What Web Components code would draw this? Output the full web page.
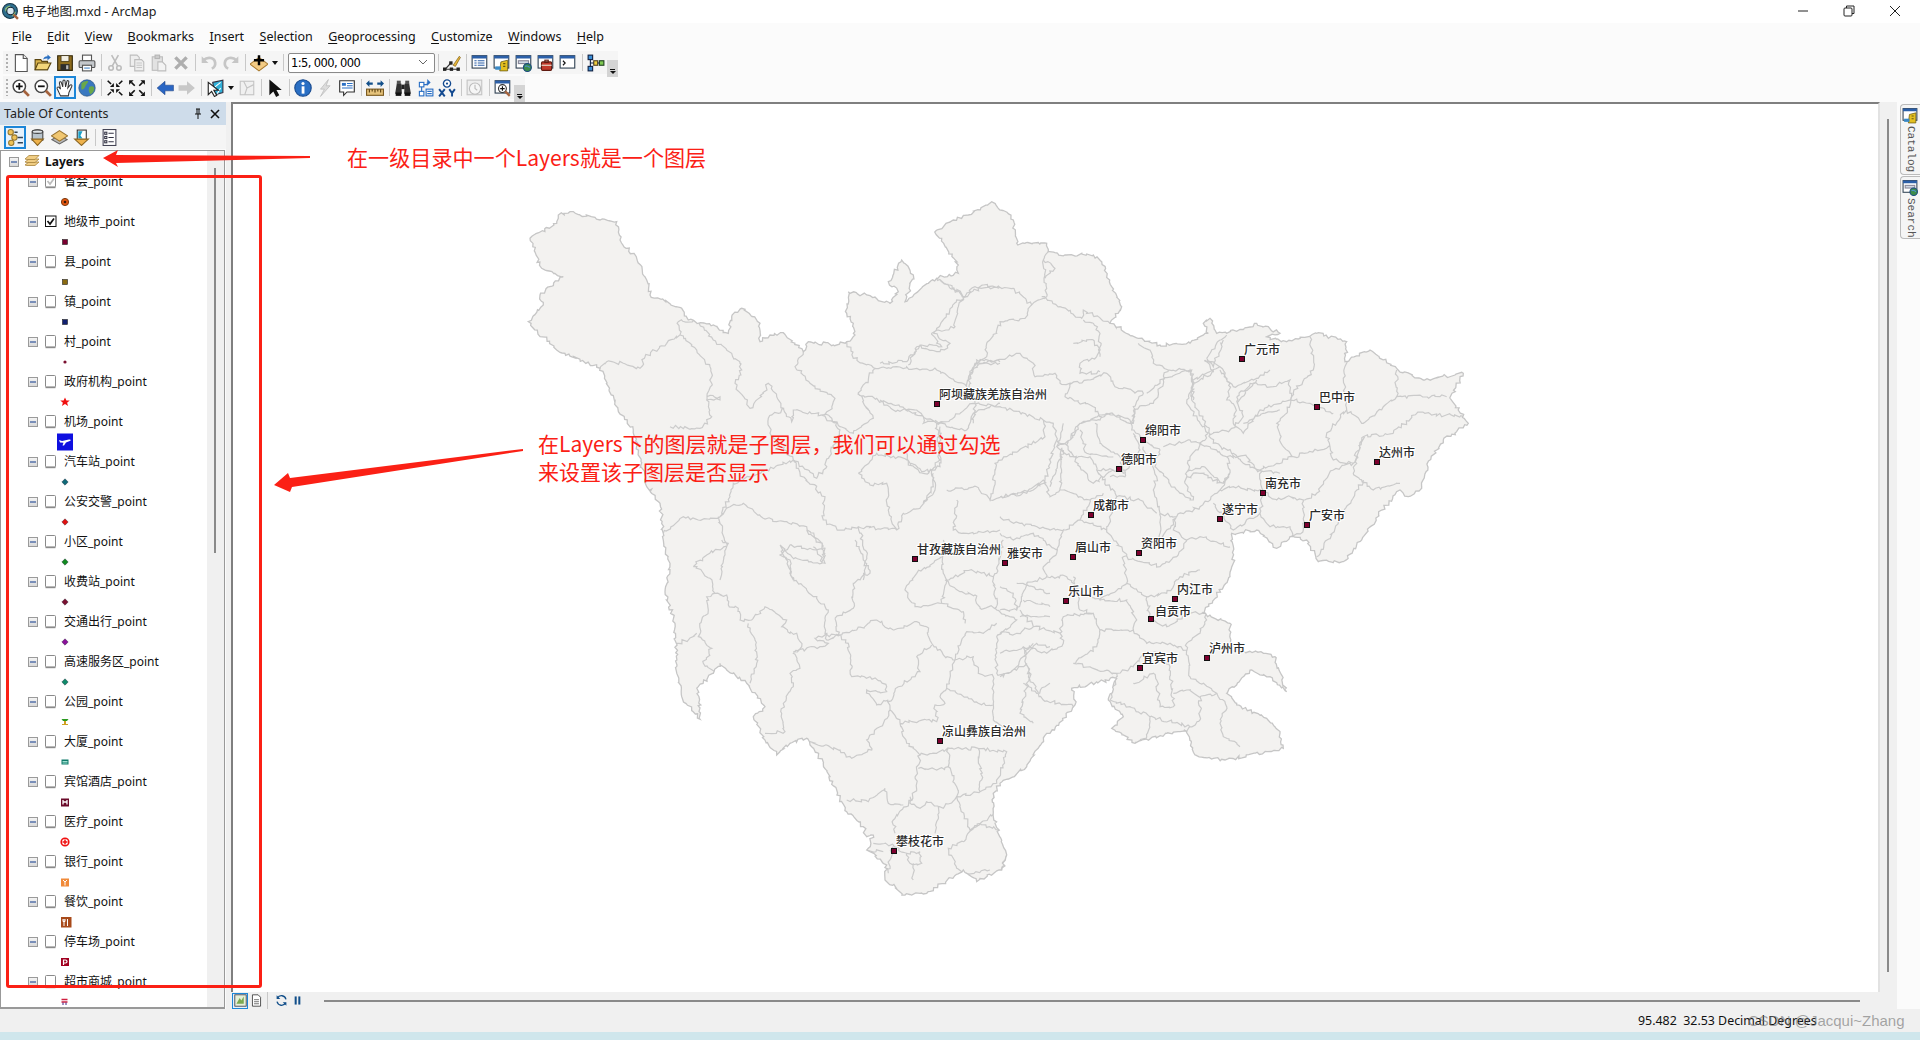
<!DOCTYPE html>
<html lang="zh">
<head>
<meta charset="utf-8">
<title>电子地图.mxd - ArcMap</title>
<style>
  html, body { margin: 0; height: 100%; overflow: hidden; background: #f0f0f0; }
  body { font-family: "Noto Sans", "Noto Sans CJK SC", sans-serif; font-size: 12px; color: #000; }
</style>
</head>
<body>
<arc-app>
  <arc-titlebar slot="title">电子地图.mxd - ArcMap</arc-titlebar>
  <arc-menubar slot="menu" items="File,Edit,View,Bookmarks,Insert,Selection,Geoprocessing,Customize,Windows,Help"></arc-menubar>

  <arc-toolbar slot="tools">
    <tool-icon name="new"></tool-icon><tool-icon name="open"></tool-icon><tool-icon name="save"></tool-icon><tool-icon name="print"></tool-icon>
    <tool-sep></tool-sep>
    <tool-icon name="cut"></tool-icon><tool-icon name="copy"></tool-icon><tool-icon name="paste"></tool-icon><tool-icon name="del"></tool-icon>
    <tool-sep></tool-sep>
    <tool-icon name="undo"></tool-icon><tool-icon name="redo"></tool-icon>
    <tool-sep></tool-sep>
    <tool-icon name="add"></tool-icon><tool-drop></tool-drop>
    <tool-sep></tool-sep>
    <scale-box>1:5, 000, 000</scale-box>
    <tool-sep></tool-sep>
    <tool-icon name="editor"></tool-icon>
    <tool-sep></tool-sep>
    <tool-icon name="wintoc"></tool-icon><tool-icon name="wincat"></tool-icon><tool-icon name="winsearch"></tool-icon><tool-icon name="wintool"></tool-icon><tool-icon name="winpy"></tool-icon>
    <tool-sep></tool-sep>
    <tool-icon name="model"></tool-icon>
    <tool-handle></tool-handle>
  </arc-toolbar>

  <arc-toolbar slot="tools">
    <tool-icon name="zoomin"></tool-icon><tool-icon name="zoomout"></tool-icon><tool-icon name="hand" selected></tool-icon><tool-icon name="globe"></tool-icon>
    <tool-sep></tool-sep>
    <tool-icon name="fixedin"></tool-icon><tool-icon name="fixedout"></tool-icon>
    <tool-sep></tool-sep>
    <tool-icon name="back"></tool-icon><tool-icon name="fwd"></tool-icon>
    <tool-sep></tool-sep>
    <tool-icon name="select"></tool-icon><tool-drop></tool-drop><tool-icon name="clear"></tool-icon>
    <tool-sep></tool-sep>
    <tool-icon name="arrow"></tool-icon>
    <tool-sep></tool-sep>
    <tool-icon name="info"></tool-icon><tool-icon name="bolt"></tool-icon><tool-icon name="popup"></tool-icon>
    <tool-sep></tool-sep>
    <tool-icon name="measure"></tool-icon>
    <tool-sep></tool-sep>
    <tool-icon name="find"></tool-icon><tool-icon name="route"></tool-icon><tool-icon name="xy"></tool-icon>
    <tool-sep></tool-sep>
    <tool-icon name="time"></tool-icon>
    <tool-sep></tool-sep>
    <tool-icon name="viewer"></tool-icon>
    <tool-handle></tool-handle>
  </arc-toolbar>

  <toc-panel slot="toc" heading="Table Of Contents">
    <layer-row name="省会_point" check="dim" swatch="capital"></layer-row>
    <layer-row name="地级市_point" check="on" swatch="sq:#7a0030"></layer-row>
    <layer-row name="县_point" swatch="sq:#8a6a10"></layer-row>
    <layer-row name="镇_point" swatch="sq:#102070"></layer-row>
    <layer-row name="村_point" swatch="dot"></layer-row>
    <layer-row name="政府机构_point" swatch="star"></layer-row>
    <layer-row name="机场_point" swatch="plane"></layer-row>
    <layer-row name="汽车站_point" swatch="di:#0f6a78"></layer-row>
    <layer-row name="公安交警_point" swatch="di:#e01010"></layer-row>
    <layer-row name="小区_point" swatch="di:#108a20"></layer-row>
    <layer-row name="收费站_point" swatch="di:#7a1030"></layer-row>
    <layer-row name="交通出行_point" swatch="di:#8a109a"></layer-row>
    <layer-row name="高速服务区_point" swatch="di:#0f8a6a"></layer-row>
    <layer-row name="公园_point" swatch="tree"></layer-row>
    <layer-row name="大厦_point" swatch="tower"></layer-row>
    <layer-row name="宾馆酒店_point" swatch="hotel"></layer-row>
    <layer-row name="医疗_point" swatch="cross"></layer-row>
    <layer-row name="银行_point" swatch="bank"></layer-row>
    <layer-row name="餐饮_point" swatch="food"></layer-row>
    <layer-row name="停车场_point" swatch="park"></layer-row>
    <layer-row name="超市商城_point" swatch="shop"></layer-row>
  </toc-panel>

  <map-view slot="map">
    <map-label x="1242" y="359">广元市</map-label>
    <map-label x="1317" y="407">巴中市</map-label>
    <map-label x="1143" y="440">绵阳市</map-label>
    <map-label x="1119" y="469">德阳市</map-label>
    <map-label x="1377" y="462">达州市</map-label>
    <map-label x="1263" y="493">南充市</map-label>
    <map-label x="1220" y="519">遂宁市</map-label>
    <map-label x="1307" y="525">广安市</map-label>
    <map-label x="1091" y="515">成都市</map-label>
    <map-label x="1073" y="557">眉山市</map-label>
    <map-label x="1139" y="553">资阳市</map-label>
    <map-label x="1005" y="563">雅安市</map-label>
    <map-label x="1066" y="601">乐山市</map-label>
    <map-label x="1175" y="599">内江市</map-label>
    <map-label x="1151" y="619" dx="4" dy="-8">自贡市</map-label>
    <map-label x="1207" y="658">泸州市</map-label>
    <map-label x="1140" y="668">宜宾市</map-label>
    <map-label x="937" y="404">阿坝藏族羌族自治州</map-label>
    <map-label x="915" y="559">甘孜藏族自治州</map-label>
    <map-label x="940" y="741">凉山彝族自治州</map-label>
    <map-label x="894" y="851">攀枝花市</map-label>
  </map-view>

  <dock-tabs slot="dock"></dock-tabs>
  <status-bar slot="status">95.482  32.53 Decimal Degrees</status-bar>
  <note-layer slot="notes"></note-layer>
</arc-app>

<script>
// ---- small base class: every element clones its own template into an open shadow root
class Shadowed extends HTMLElement {
  constructor(html) {
    super();
    this.attachShadow({ mode: "open" });
    const t = document.createElement("template");
    t.innerHTML = html;
    this.shadowRoot.appendChild(t.content.cloneNode(true));
  }
}

// ---- toolbar icons, 16x16 grid
const win = (body) => `<rect x="1" y="1.5" width="13" height="11" fill="#fff" stroke="#345"/><rect x="1" y="1.5" width="13" height="2.5" fill="#2b5fa8"/>${body}`;
const ICONS = {
  new: `<path d="M3 .5h7l3.5 3.5v11.5H3z" fill="#fff" stroke="#555"/><path d="M10 .5V4h3.5" fill="#e8e8e8" stroke="#555"/>`,
  open: `<path d="M1 5h5l1 1.5h5V14H1z" fill="#d9b24a" stroke="#5a4510"/><path d="M1 14l2.5-6H15l-3 6z" fill="#f3d67a" stroke="#5a4510"/><path d="M8 5c.5-2 2-3 4-3V.5L15 3l-3 2.5V4c-1.5 0-3 .2-4 1z" fill="#2a6fc0"/>`,
  save: `<path d="M1.5 1.5h13v13h-13z" fill="#8e6c1e" stroke="#33270a"/><rect x="4.5" y="1.5" width="7" height="5" fill="#f2efe4" stroke="#33270a" stroke-width=".6"/><rect x="4" y="9" width="8" height="5.5" fill="#2d2d2d"/><rect x="9" y="10" width="2" height="3.5" fill="#bbb"/>`,
  print: `<rect x="4" y="1" width="8" height="5" fill="#fff" stroke="#555"/><rect x="1" y="6" width="14" height="6" rx="1" fill="#c4c8cc" stroke="#555"/><rect x="4" y="10" width="8" height="5" fill="#fff" stroke="#555"/><rect x="5.5" y="12" width="5" height="1" fill="#4a88c8"/>`,
  cut: `<g fill="none" stroke="#bcbcbc" stroke-width="1.4"><circle cx="4.5" cy="12.5" r="2"/><circle cx="11.5" cy="12.5" r="2"/><path d="M5.5 10.8L11 1M10.5 10.8L5 1"/></g>`,
  copy: `<g fill="#eee" stroke="#bdbdbd"><path d="M2 1h6l2 2v8H2z"/><path d="M6 5h6l2 2v8H6z"/></g><path d="M7.5 8h5M7.5 10h5M7.5 12h5" stroke="#c8c8c8"/>`,
  paste: `<rect x="2" y="2.5" width="9" height="12" fill="#e2e2e2" stroke="#bdbdbd"/><rect x="4.5" y="1" width="4" height="3" fill="#ccc" stroke="#b5b5b5"/><path d="M7 7h4l3 3v5H7z" fill="#f3f3f3" stroke="#bdbdbd"/>`,
  del: `<path d="M3 3l10 10M13 3L3 13" stroke="#aeaeae" stroke-width="3"/>`,
  undo: `<path d="M3 5.5C7 2 13 3 13.5 8c.2 2-1 4-3 5" fill="none" stroke="#c6c6c6" stroke-width="2.4"/><path d="M1.5 2v6h6z" fill="#c6c6c6"/>`,
  redo: `<path d="M13 5.5C9 2 3 3 2.5 8c-.2 2 1 4 3 5" fill="none" stroke="#c6c6c6" stroke-width="2.4"/><path d="M14.5 2v6h-6z" fill="#c6c6c6"/>`,
  add: `<path d="M8 3L16 9l-8 6-8-6z" fill="#f3cb84" stroke="#a87a30"/><path d="M8 1v9M3.5 5.5h9" stroke="#000" stroke-width="2.2"/>`,
  editor: `<path d="M9 10L14.5 2l1 1L11 11z" fill="#e8b83c" stroke="#7a5a10" stroke-width=".6"/><path d="M1.5 13.5h12M7 8l-5 5.5" stroke="#333"/><rect x="0" y="12" width="3" height="3" fill="#222"/><rect x="6" y="12" width="3" height="3" fill="#222"/><rect x="12" y="12" width="3" height="3" fill="#222"/><rect x="5.5" y="6.5" width="3" height="3" fill="#222"/>`,
  wintoc: win(`<path d="M3 6h2M6 6h6M3 8h2M6 8h6M3 10h2M6 10h6" stroke="#2b5fa8"/>`),
  wincat: win(`<path d="M7 7l6-1.500V15H6z" fill="#e4c020" stroke="#6a5a10" stroke-width=".7"/><path d="M9 8.500h2M9 11h2" stroke="#6a5a10"/><rect x="2" y="11" width="5" height="3" fill="#3a8ac8"/>`),
  winsearch: win(`<rect x="3" y="6" width="9" height="2.500" fill="#cfd8e4" stroke="#889"/><circle cx="11" cy="12" r="3.500" fill="#3c8c4a" stroke="#1a4a80"/><path d="M9 11c2-1 3 0 4 1" stroke="#4a90d8" fill="none"/>`),
  wintool: win(`<rect x="4" y="7" width="9" height="7.500" rx="1" fill="#c0392b" stroke="#601a10"/><rect x="7" y="5.500" width="3" height="2" fill="none" stroke="#601a10"/><path d="M4 10h9" stroke="#e8e0d0"/>`),
  winpy: win(`<path d="M3.500 6l2 2-2 2" fill="none" stroke="#111"/>`),
  model: `<rect x="1" y="1" width="4" height="4" fill="#3a8fd8" stroke="#124"/><rect x="1" y="11" width="4" height="4" fill="#3a8fd8" stroke="#124"/><rect x="11" y="6" width="4" height="4" fill="#7ec850" stroke="#242"/><rect x="6" y="6" width="3.500" height="4" fill="#f0d040" stroke="#542"/><path d="M3 5v6M3 8h3M9.500 8H11" stroke="#124"/>`,
  zoomin: `<circle cx="6.500" cy="6.500" r="5.500" fill="#fff" stroke="#444" stroke-width="1.300"/><path d="M10.500 10.500L15 15" stroke="#a5623c" stroke-width="2.500"/><path d="M3.500 6.500h6M6.500 3.500v6" stroke="#111" stroke-width="1.600"/>`,
  zoomout: `<circle cx="6.500" cy="6.500" r="5.500" fill="#fff" stroke="#444" stroke-width="1.300"/><path d="M10.500 10.500L15 15" stroke="#a5623c" stroke-width="2.500"/><path d="M3.500 6.500h6" stroke="#111" stroke-width="1.600"/>`,
  hand: `<path d="M4 15L1 8.500c-.5-1.200 1-2 1.800-1L4 9 3 3.500c-.2-1.300 1.500-1.600 1.800-.3L6 7l.2-5.200c0-1.300 1.800-1.300 1.800 0L8.500 7l1.200-4.800c.3-1.200 1.900-.9 1.700.3L10.500 8l2-2.500c.8-1 2.200 0 1.500 1.200L11.500 12l-.5 3z" fill="#fff" stroke="#333" stroke-width=".9"/>`,
  globe: `<circle cx="8" cy="8" r="7.300" fill="#3a78c0" stroke="#24507e" stroke-width=".6"/><path d="M3 4c2-2 5-2.500 6-2 0 2-2 2.500-2.500 4.500S4 10 3 9zM10 7c2-1 4-.5 4.500 1 0 3-2 5-3.500 5.500-1-2-2-3-1-6.500z" fill="#6aa84a"/>`,
  fixedin: `<path d="M7 7H3.500L7 3.500zM9 7h3.500L9 3.500zM7 9H3.500L7 12.500zM9 9h3.500L9 12.500z" fill="#111"/><path d="M1.500 1.500l3 3M14.500 1.500l-3 3M1.500 14.500l3-3M14.500 14.500l-3-3" stroke="#111" stroke-width="1.400"/>`,
  fixedout: `<path d="M1 1h4L1 5zM15 1h-4l4 4zM1 15h4l-4-4zM15 15h-4l4-4z" fill="#111"/><path d="M3 3l3 3M13 3l-3 3M3 13l3-3M13 13l-3-3" stroke="#111" stroke-width="1.400"/>`,
  back: `<path d="M1 8l7-6v3.500h7.500v5H8V14z" fill="#2a66c4" stroke="#1a3f80" stroke-width=".5"/>`,
  fwd: `<path d="M15 8L8 2v3.500H.5v5H8V14z" fill="#c8c8c8"/>`,
  select: `<path d="M6 3l9-2v11l-7 2z" fill="#30b0d8" stroke="#334"/><path d="M8 7l5-4M10 13l3-5" stroke="#fff"/><path d="M2 3l0 11 3-3 2.500 4.500 2-1L7 10h4z" fill="#fff" stroke="#222"/>`,
  clear: `<rect x="2" y="2" width="12" height="12" fill="#f0f0f0" stroke="#c4c4c4"/><path d="M5 2l3 6-2 6M8 8l6-3" fill="none" stroke="#c4c4c4"/>`,
  arrow: `<path d="M3 .5v14l3.500-3.500 2.500 5 2.800-1.500-2.500-4.700H14z" fill="#111"/>`,
  info: `<circle cx="8" cy="8" r="7.300" fill="#2a6fc4" stroke="#174a90"/><circle cx="8" cy="4" r="1.400" fill="#fff"/><rect x="6.800" y="6.500" width="2.500" height="6.500" fill="#fff"/>`,
  bolt: `<path d="M11 .5L4 9h3.500L4 15.500 12.500 6H9z" fill="#dcdcdc" stroke="#bdbdbd" stroke-width=".7"/>`,
  popup: `<path d="M1.500 1.500h13v10H8l-3 3v-3H1.500z" fill="#fff" stroke="#333"/><rect x="3.500" y="3.500" width="3.500" height="2.500" fill="#2a6fc4"/><path d="M8 4h5M8 6h5M3.500 8h9.500" stroke="#2a6fc4"/>`,
  measure: `<rect x=".5" y="9" width="15" height="5.500" fill="#e5c27a" stroke="#7a5a20"/><path d="M3 9v3M5.500 9v2M8 9v3M10.500 9v2M13 9v3" stroke="#5a4010"/><path d="M0 4l3-3v2h3v2H3v2zM16 4l-3-3v2h-3v2h3v2z" fill="#124f8a"/>`,
  find: `<path d="M1 13l1.500-9h4L7 13zM9 13l.5-9h4l1.500 9z" fill="#333"/><rect x="2.500" y="1.500" width="3.500" height="3" fill="#555"/><rect x="10" y="1.500" width="3.500" height="3" fill="#555"/><rect x="6.500" y="5" width="3" height="4" fill="#222"/><rect x="1.500" y="12" width="5" height="3" fill="#111"/><rect x="9.500" y="12" width="5" height="3" fill="#111"/>`,
  route: `<path d="M5 13V5h5V3" fill="none" stroke="#2a6fc4"/><path d="M10 0l3 3-3 3z" fill="#2a6fc4"/><rect x="3" y="3" width="4" height="4" fill="#fff" stroke="#2a6fc4"/><rect x="3" y="11" width="4" height="4" fill="#fff" stroke="#2a6fc4"/><rect x="9" y="9" width="6" height="6" fill="#fff" stroke="#2a6fc4"/><path d="M10 11h4M10 13h4" stroke="#2a6fc4"/>`,
  xy: `<circle cx="8" cy="4" r="3.200" fill="#fff" stroke="#134a90" stroke-width="1.200"/><circle cx="8" cy="4" r="1" fill="#134a90"/><path d="M1 9l5 6.500M6 9l-5 6.500M10 9l2.500 3.500L15 9M12.500 12.500v3" stroke="#134a90" stroke-width="1.700" fill="none"/>`,
  time: `<rect x="1" y="1" width="13" height="13" fill="#eee" stroke="#c4c4c4"/><circle cx="8" cy="8.500" r="5" fill="#f6f6f6" stroke="#bcbcbc"/><path d="M8 5v3.500l2 1.500" stroke="#bcbcbc" fill="none"/>`,
  viewer: win(`<circle cx="7.500" cy="8.500" r="3.500" fill="#fff" stroke="#333"/><path d="M5.500 8.500h4M7.500 6.500v4" stroke="#111"/><path d="M10 11l4 4" stroke="#a5623c" stroke-width="2"/>`),
  tocdraw: `<circle cx="3.500" cy="3" r="2.500" fill="#eec35a" stroke="#9a7a30"/><circle cx="7" cy="8" r="2.500" fill="#eec35a" stroke="#9a7a30"/><circle cx="4" cy="13" r="2.500" fill="#eec35a" stroke="#9a7a30"/><path d="M10 8h5M10 13h5M7 3h3" stroke="#345" stroke-width="1.400"/>`,
  tocsource: `<path d="M3 2.500c0-2.500 10-2.500 10 0v8H3z" fill="#b8c4cc" stroke="#444"/><ellipse cx="8" cy="2.500" rx="5" ry="1.600" fill="#dfe5e8" stroke="#444"/><path d="M2.500 9.500h11L8 15.500z" fill="#eeb24c" stroke="#8a6420"/>`,
  tocvis: `<path d="M8 6l7 4-7 4-7-4z" fill="#b9b9b9" stroke="#666"/><path d="M8 1.500l7.500 5L8 11.500.5 6.500z" fill="#f0c670" stroke="#9a7430"/>`,
  tocsel: `<rect x="4" y="1" width="8.500" height="9" fill="#fff" stroke="#333"/><path d="M5 2h4l-2 4 2 3H5z" fill="#1aa0c8"/><path d="M1.500 9.500h13L8 15.500z" fill="#eeb24c" stroke="#8a6420"/>`,
  tocopt: `<rect x="2" y=".5" width="12" height="15" fill="#fff" stroke="#445"/><path d="M7 4h5M7 8h5M7 12h5" stroke="#334"/><rect x="3.500" y="3" width="2" height="2" fill="none" stroke="#334"/><rect x="3.500" y="7" width="2" height="2" fill="none" stroke="#334"/><rect x="3.500" y="11" width="2" height="2" fill="none" stroke="#334"/>`,
  pagemap: `<rect x="1" y="1" width="14" height="14" fill="#e6efd8" stroke="#334"/><path d="M3 12l4-7 2 3 3-5v9z" fill="#7aa850"/>`,
  pagelay: `<path d="M3 1h7l3 3v11H3z" fill="#fff" stroke="#333"/><path d="M5 7h6M5 9.500h6M5 12h6" stroke="#555"/>`,
  refresh: `<path d="M13.500 6.500A5.700 5.700 0 0 0 3 5M2.500 9.500A5.700 5.700 0 0 0 13 11" fill="none" stroke="#124f8a" stroke-width="1.600"/><path d="M2 1.500V6h4.500zM14 14.500V10H9.500z" fill="#124f8a"/>`,
  pause: `<rect x="4.500" y="3" width="2.500" height="10" fill="#124f8a"/><rect x="9" y="3" width="2.500" height="10" fill="#124f8a"/>`
};

class ToolIcon extends Shadowed {
  constructor() {
    super(`<style>
      :host { display: flex; align-items: center; justify-content: center; width: 22px; height: 23px; box-sizing: border-box; flex: none; }
      :host([selected]) { border: 2px solid #1c86d8; background: #e6f1fb; }
      svg { width: var(--icon-size, 18px); height: var(--icon-size, 18px); display: block; }
    </style><svg viewBox="0 0 16 16"></svg>`);
  }
  connectedCallback() {
    this.shadowRoot.querySelector("svg").innerHTML = ICONS[this.getAttribute("name")] || "";
  }
}

class ToolSep extends Shadowed {
  constructor() {
    super(`<style>
      :host { display: flex; justify-content: center; align-items: center; width: 6px; height: 23px; flex: none; }
      i { display: block; width: 1px; height: 17px; background: #c8c8c8; }
    </style><i></i>`);
  }
}

class ToolDrop extends Shadowed {
  constructor() {
    super(`<style>
      :host { display: flex; justify-content: center; align-items: center; width: 10px; height: 23px; flex: none; }
      i { width: 0; height: 0; border: 3.5px solid transparent; border-top: 4px solid #111; border-bottom: 0; }
    </style><i></i>`);
  }
}

class ToolHandle extends Shadowed {
  constructor() {
    super(`<style>
      :host { display: flex; flex-direction: column; align-items: center; justify-content: flex-end; gap: 1px; width: 11px; height: 26px; margin: 0 0 -3px auto; padding-bottom: 3px; box-sizing: border-box; background: linear-gradient(#f5f5f5 35%, #d4d4d4 35%); flex: none; }
      u { display: block; width: 5px; height: 1px; background: #111; }
      b { display: block; width: 0; height: 0; border: 3px solid transparent; border-top: 3px solid #111; border-bottom: 0; }
    </style><u></u><b></b>`);
  }
}

class ScaleBox extends Shadowed {
  constructor() {
    super(`<style>
      :host { display: flex; align-items: center; justify-content: space-between; width: 147px; height: 20px; margin-left: 2px; box-sizing: border-box; padding: 0 6px 0 2px; background: #fff; border: 1px solid #8a8a8a; border-radius: 2px; font: 11.500px "DejaVu Sans", sans-serif; letter-spacing: -.6px; flex: none; }
      svg { width: 10px; height: 7px; }
    </style><slot></slot><svg viewBox="0 0 10 7"><path d="M1 1l4 4 4-4" fill="none" stroke="#666"/></svg>`);
  }
}

class ArcToolbar extends Shadowed {
  constructor() {
    super(`<style>
      :host { display: flex; align-items: center; height: 23px; padding: 0 0 0 3px; margin-left: 3px; width: max-content; background: #f5f5f5; }
      .grip { width: 4px; height: 17px; margin-right: 0; background: repeating-linear-gradient(#b0b0b0 0 2px, transparent 2px 4px); background-size: 2px 100%; background-repeat: no-repeat; flex: none; }
    </style><span class="grip"></span><slot></slot>`);
  }
}

class ArcTitlebar extends Shadowed {
  constructor() {
    super(`<style>
      :host { display: flex; align-items: center; height: 23px; padding-right: 2px; box-sizing: border-box; background: #fff; font: 12.500px "Noto Sans", "Noto Sans CJK SC", sans-serif; color: #222; }
      .logo { width: 17px; height: 17px; margin: 0 3px 0 2px; flex: none; }
      .text { flex: 1; padding-bottom: 2px; }
      .ctl { width: 46px; height: 23px; display: flex; align-items: center; justify-content: center; padding-bottom: 1px; box-sizing: border-box; }
      .ctl svg { width: 12px; height: 12px; }
    </style>
    <svg class="logo" viewBox="0 0 16 16"><circle cx="7.500" cy="7.500" r="7" fill="#2f6f8f" stroke="#17384a"/><path d="M3 5c2-2 4-3 5-2 0 2-2 2-2 4l-3 1zM9 8c2-1 4 0 4 1l-3 4z" fill="#8fbf7a"/><circle cx="8" cy="7.500" r="3.500" fill="#d8e8f0" stroke="#123"/><path d="M11 11l4 4" stroke="#a5623c" stroke-width="2.400"/></svg>
    <span class="text"><slot></slot></span>
    <span class="ctl"><svg viewBox="0 0 12 12"><path d="M1 6h10" stroke="#222"/></svg></span>
    <span class="ctl"><svg viewBox="0 0 12 12"><path d="M3.500 3V1h7.500v7.500H9" fill="none" stroke="#222"/><rect x="1" y="3" width="8" height="8" rx="1" fill="none" stroke="#222"/></svg></span>
    <span class="ctl"><svg viewBox="0 0 12 12"><path d="M1 1l10 10M11 1L1 11" stroke="#222"/></svg></span>`);
  }
}

class ArcMenubar extends Shadowed {
  constructor() {
    super(`<style>
      :host { display: flex; align-items: center; height: 28px; padding: 0 0 2px 4px; box-sizing: border-box; background: #fbfbfb; font: 12.500px "Noto Sans", sans-serif; color: #111; }
      span { padding: 0 7.700px; }
      u { text-underline-offset: 2px; }
    </style>`);
  }
  connectedCallback() {
    (this.getAttribute("items") || "").split(",").forEach(item => {
      const s = document.createElement("span");
      s.innerHTML = `<u>${item[0]}</u>${item.slice(1)}`;
      this.shadowRoot.appendChild(s);
    });
  }
}

// ---- legend swatches in the table of contents
const SWATCH = {
  capital: `<circle cx="9" cy="9" r="3.600" fill="#e4560f" stroke="#7a3a10"/><circle cx="9" cy="9" r="1.300" fill="#3a1a08"/>`,
  dot: `<circle cx="9" cy="9" r="1.600" fill="#7a1030"/>`,
  star: `<path d="M9 4.500l1.400 3h3.300l-2.600 2.200 1 3.300L9 11l-3.100 2 1-3.300-2.600-2.200h3.300z" fill="#f01010"/>`,
  plane: `<rect x="1" y=".5" width="16" height="17" fill="#0f10e0"/><path d="M3 7l3 1 7-1.500c2-.3 2.500 1 .8 1.500L10 9.500l-2 3H6.500l1-2.700L4 9.500z" fill="#fff"/>`,
  tree: `<path d="M5.500 6h7l-1.500 2H7z" fill="#2a9a20"/><rect x="8" y="8" width="2" height="3" fill="#d0a020"/><rect x="6" y="11" width="6" height="1" fill="#d0a020"/>`,
  tower: `<rect x="5.500" y="6.500" width="7" height="5" fill="#0f7a6a"/><path d="M6.500 8.500h5M6.500 10h5" stroke="#9fe0d0"/>`,
  hotel: `<rect x="5" y="5.500" width="8" height="8" fill="#6a0a2a"/><path d="M7 7v4.500M11 7v4.500M7 9h4" stroke="#fff" stroke-width="1.300"/>`,
  cross: `<circle cx="9" cy="9" r="3.800" fill="none" stroke="#f01010" stroke-width="1.600"/><path d="M9 6.500v5M6.500 9h5" stroke="#f01010" stroke-width="1.500"/>`,
  bank: `<rect x="5" y="5.500" width="8" height="8" fill="#f08a3a"/><path d="M7 7l2 2 2-2M9 9v3.500" stroke="#fff" fill="none"/>`,
  food: `<rect x="5" y="4" width="10.500" height="10.500" fill="#a84a1a"/><path d="M8 6v7M11.500 6v7M7 6v2.500h2V6" stroke="#fff" fill="none"/>`,
  park: `<rect x="5" y="5" width="8" height="8" fill="#a00020"/><path d="M7.500 12V7h2a1.300 1.300 0 0 1 0 3H7.500" stroke="#fff" stroke-width="1.200" fill="none"/>`,
  shop: `<rect x="5.500" y="6" width="6" height="5.500" fill="#fff"/><path d="M5.500 6.500h6M5.500 9h6" stroke="#d02040" stroke-width="1.400"/><path d="M7 9.500v2.500M10 9.500v2.500" stroke="#402080"/>`
};
function swatchMarkup(spec) {
  const [kind, colour] = spec.split(":");
  if (kind === "sq") return `<rect x="6.500" y="6.500" width="5" height="5" fill="${colour}" stroke="#222" stroke-width=".6"/>`;
  if (kind === "di") return `<path d="M9 5.800L12.200 9 9 12.200 5.800 9z" fill="${colour}" stroke="#223" stroke-width=".4"/>`;
  return SWATCH[kind] || "";
}

class LayerRow extends Shadowed {
  constructor() {
    super(`<style>
      :host { display: block; height: 40px; overflow: visible; font: 12px "Noto Sans", "Noto Sans CJK SC", sans-serif; color: #111; }
      .head { display: flex; align-items: center; height: 20px; padding-left: 27px; }
      .minus { width: 10px; height: 10px; box-sizing: border-box; border: 1px solid #9a9a9a; background: linear-gradient(#f4f4f4, #d8d8d8); position: relative; flex: none; margin-right: 7px; }
      .minus::after { content: ""; position: absolute; left: 1px; right: 1px; top: 3px; height: 2px; background: #33559a; transform: scaleY(.6); }
      .check { width: 12px; height: 14px; flex: none; margin-right: 7px; }
      .label { padding-bottom: 2px; }
      .leg { display: block; width: 18px; height: 18px; margin: 1px 0 0 55px; overflow: visible; }
    </style>
    <div class="head"><span class="minus"></span><svg class="check" viewBox="0 0 12 14"></svg><span class="label"></span></div>
    <svg class="leg" viewBox="0 0 18 18"></svg>`);
  }
  connectedCallback() {
    const r = this.shadowRoot;
    r.querySelector(".label").textContent = this.getAttribute("name");
    r.querySelector(".leg").innerHTML = swatchMarkup(this.getAttribute("swatch"));
    const state = this.getAttribute("check");
    let box = `<rect x=".5" y=".5" width="10" height="11.500" rx="1" fill="#fff" stroke="#8a8a8a"/><path d="M.5 12.500h10" stroke="#8a8a8a" stroke-width="1.400"/>`;
    if (state === "on") box = `<rect x=".5" y="1" width="10.500" height="10.500" fill="#fff" stroke="#111"/><path d="M2.500 6l2.500 3 4-5.500" fill="none" stroke="#111" stroke-width="1.700"/>`;
    if (state === "dim") box += `<path d="M2.500 6l2.500 3 4-5.500" fill="none" stroke="#bbb" stroke-width="1.700"/>`;
    r.querySelector(".check").innerHTML = box;
  }
}

class TocPanel extends Shadowed {
  constructor() {
    super(`<style>
      :host { display: flex; flex-direction: column; width: 226px; height: 100%; flex: none; font: 12.500px "Noto Sans", sans-serif; }
      .title { display: flex; align-items: center; height: 23px; padding-left: 4px; background: #cedcea; color: #222; flex: none; }
      .title span { flex: 1; }
      .title svg { width: 12px; height: 12px; margin-right: 5px; }
      .bar { display: flex; align-items: center; height: 24px; padding-left: 4px; background: #f5f5f5; flex: none; --icon-size: 17px; }
      .bar tool-icon { height: 23px; }
      .tree { flex: 1; display: flex; min-height: 0; width: 225px; box-sizing: border-box; margin-top: 1px; border: 1px solid #999; border-bottom-width: 2px; background: #fff; overflow: hidden; }
      .list { flex: 1; min-width: 0; overflow: hidden; }
      .root { display: flex; align-items: center; height: 21px; padding-left: 8px; font-weight: 700; font-size: 12px; color: #111; }
      .root .box { width: 10px; height: 10px; box-sizing: border-box; border: 1px solid #9a9a9a; background: linear-gradient(#f4f4f4, #d8d8d8); margin-right: 5px; position: relative; }
      .root .box::after { content: ""; position: absolute; left: 1px; right: 1px; top: 3px; height: 2px; background: #33559a; transform: scaleY(.6); }
      .root svg { width: 16px; height: 15px; margin-right: 5px; }
      .scroll { width: 17px; background: #f0f0f0; flex: none; }
      .thumb { width: 2px; height: 385px; margin: 17px 0 0 7px; background: #8a8a8a; }
    </style>
    <div class="title"><span></span>
      <svg viewBox="0 0 12 12"><path d="M4 1h4M5 1v5M7 1v5M3 6h6M6 6v5" stroke="#111" fill="none"/></svg>
      <svg viewBox="0 0 12 12"><path d="M2 2l8 8M10 2l-8 8" stroke="#111" stroke-width="1.600"/></svg>
    </div>
    <div class="bar">
      <tool-icon name="tocdraw" selected></tool-icon><tool-icon name="tocsource"></tool-icon><tool-icon name="tocvis"></tool-icon><tool-icon name="tocsel"></tool-icon><tool-sep></tool-sep><tool-icon name="tocopt"></tool-icon>
    </div>
    <div class="tree">
      <div class="list">
        <div class="root"><i class="box"></i>
          <svg viewBox="0 0 16 15"><g fill="#f0cd83" stroke="#a8843c" stroke-width=".8"><path d="M1 11l4-3h10l-4 3.500H3z"/><path d="M1 8l4-3h10l-4 3.500H3z"/><path d="M1 5l4-3.500h10L11 5.500H3z"/></g></svg>
          Layers</div>
        <slot></slot>
      </div>
      <div class="scroll"><div class="thumb"></div></div>
    </div>`);
  }
  connectedCallback() {
    this.shadowRoot.querySelector(".title span").textContent = this.getAttribute("heading");
  }
}

// ---- the province map: outline and county borders traced from the reference,
// written in the pixel grid of the crops they were read from (origin, 3x)
const Z5 = [500, 180], Z6 = [1000, 300], Z9 = [800, 700], Z10 = [650, 540], Z11 = [880, 190];
const parse = (z, s) => s.trim().split(/\s+/).map(p => {
  const [x, y] = p.split(",").map(Number);
  return [z[0] + x / 3, z[1] + y / 3];
});
const OUTLINE = [
  ...parse(Z5, "90,175 170,130 175,105 210,95 300,120 350,125 360,180 410,235 440,300 450,345 545,385 565,420 640,435 685,460 695,410 725,385 780,430 780,485 810,465 850,458 910,515 925,485 1000,495 1040,485 1065,465 1060,430 1040,400 1045,335 1100,345 1170,370 1195,335 1165,305 1205,240 1240,285 1215,365"),
  ...parse(Z11, "145,280 170,265 235,250 235,225 165,125 220,90 265,75 335,35 400,90 410,160 500,160 505,185 555,195 640,195 665,215 695,290 725,350 690,400 775,445 840,465 930,460 985,430 970,400 990,385 1010,430 1040,430 1130,400 1200,430"),
  ...parse(Z6, "800,110 860,125 950,100 1040,125 1035,185 1110,150 1190,205 1270,240 1390,220 1350,295 1405,370 1330,420 1290,480 1265,565 1225,590 1200,570 1145,630 1085,720 1030,785 955,785 920,720 870,710 830,745 770,690 695,700 700,790 690,830 610,940 690,970 695,1050 770,1055 825,1070 860,1175 810,1130 750,1110 680,1180 710,1210"),
  ...parse(Z9, "1310,15 1400,55 1440,100 1450,145 1275,180 1185,165 1160,95 1100,100 1005,130 935,85 970,50 925,0"),
  ...parse(Z6, "350,1135 215,1165 225,1215 150,1300"),
  ...parse(Z9, "740,100 680,200 600,250 580,280 585,370 620,465 605,510 530,545 490,510 380,580 315,585 255,540"),
  ...parse(Z10, "710,975 650,930 670,885 650,890 640,860 590,815 570,775 520,670 470,595 420,610 380,645 345,600 310,530 345,500 290,430 230,390 210,370 190,400 145,440 150,538 95,470 80,380 75,250 45,155 60,70 40,0"),
  ...parse(Z5, "490,1060 480,970 440,920 400,750 350,680 300,565 170,510 85,425 130,375 120,345 190,290 125,265")
];
const BORDERS = [
  [Z5, `300,565 320,545 370,550 420,565 435,530 500,490 540,465 535,425 590,420
        540,465 590,510 630,560 635,610 620,660 635,710 600,745 510,740
        590,420 640,480 680,510 720,550 725,570 705,610 750,685 790,640 805,610 830,650 850,685 805,715 810,760 880,840 950,895 970,870 1020,750 990,710 880,690 875,725 850,685
        910,515 885,560 930,610 1005,655 990,690 965,705 1020,740 1060,760 1120,715 1075,640 1125,565 1060,535 1040,485
        1125,565 1190,560 1310,570 1400,620 1410,580 1440,550 1500,550
        1075,640 1130,655 1180,690 1250,690 1310,730 1400,750 1420,700 1500,670
        880,840 900,880 975,950 970,1020 1020,1050 1075,1040 1190,1050 1210,1000 1260,985 1300,920 1295,870 1320,840 1310,730
        1075,880 1110,915 1160,910 1165,990 1190,1050
        1075,880 1130,820 1220,840 1265,875 1295,870
        490,1060 550,1010 595,1020 660,1010 690,950 700,910 880,840
        660,1010 690,980 730,970 790,1015 860,1025 920,1040 970,1100
        655,1010 680,1090 660,1200
        840,1095 875,1130 965,1150 975,1105 920,1050
        840,1095 880,1200
        1075,1040 1100,1130 1090,1200
        1300,460 1350,490 1320,515 1250,500 1225,555
        1300,460 1370,360 1400,350 1320,300
        1400,350 1450,315 1500,320
        1405,600 1430,540 1500,545
        1370,960 1360,1050 1400,1060 1500,1050
        620,650 660,650 660,660 620,660`],
  [Z10, `130,80 170,45 235,10 215,0
        130,80 180,115 195,160 170,170 175,210 155,240 145,290 185,325 160,370 195,395
        80,310 115,300 140,280
        195,160 230,165 235,195 265,205 270,240 305,240 345,200 410,240 395,260 420,280 440,280 455,320 430,340 450,385 420,400 430,440 400,490 395,520 405,575 345,580
        295,250 315,300 320,370 300,430
        430,335 510,320 535,310 495,295 525,285 570,285 595,310 605,410 660,410 710,440 710,455 650,450 680,495 715,480 720,510 690,560 650,600 665,630 605,655 570,630 480,605
        570,285 530,300 525,235 535,210 490,170 470,150 425,110 420,60 390,45 420,15 480,25 520,30 525,70 490,20
        555,235 565,285 620,270 680,240 730,270 800,245 830,260 845,310 880,345 915,360 935,300 950,275 1000,280 1040,250
        555,235 610,205 610,130 660,100 640,60 615,0
        845,315 800,350 810,395 745,440 715,485
        720,510 750,550 830,540 860,545 855,495 885,490 870,470 890,445 985,490 1030,495
        915,360 890,445
        915,360 970,350 985,400 1030,410 1030,490 1030,540 1100,590
        750,550 770,610 810,645 800,690 800,750 770,800 730,840 735,880
        810,645 860,640 900,625 985,625 1070,635 1040,730 990,755
        805,685 860,690 895,680 895,625
        895,680 920,740 920,770 880,805 830,785 810,805 780,790 780,770
        985,625 995,720 990,755 920,770 960,870 990,850 1050,870 1070,945 1050,1000
        1030,760 1035,820 965,870 940,905 895,925 920,985 950,1000 1020,990
        865,800 855,880
        590,780 655,785 705,745 715,790 760,795
        670,910 730,915 770,940 780,970 815,970 810,935 770,940
        730,920 720,960 715,1000
        790,970 790,1020
        650,930 700,935
        880,0 880,100 890,120 875,190 795,200 765,150 800,100 875,50
        890,120 960,90 1030,110 1040,100 1060,0
        875,190 940,215 945,250
        885,120 930,155 975,165 990,205 1040,200
        1030,110 1040,210 1100,240 1040,290 1040,400 1060,410 1130,370 1140,400 1110,520 1150,550
        1110,230 1200,230
        1100,130 1180,150 1200,160
        1120,350 1160,310 1200,320
        1120,430 1160,460 1200,430
        1120,180 1200,200`],
  [Z11, `170,265 255,320 285,290 400,295 455,345 500,320 490,210 505,185
        495,265 525,235 490,210
        485,320 540,350 605,385 610,360 690,400
        455,345 435,385 360,395 350,430 320,460 320,500 285,520 265,570 285,640 280,700
        255,320 235,350 225,410 155,430 185,470 120,465 85,510 0,520
        285,520 350,510 420,490 460,520 465,560 525,550 540,580 575,580 555,620 640,650 665,680
        575,580 630,570 680,550 705,590 790,610 760,650 760,700
        800,610 840,580 865,540 935,540 940,580 920,640 960,700 985,730
        0,630 60,650 130,680 130,700 210,690 280,640 360,650 490,690 520,700 530,750 560,765 600,700 660,690 690,670 750,690 755,720 790,750
        490,690 495,740 380,800 345,820 340,900 330,930 290,890 200,900
        180,710 180,830 130,850 85,825 80,790
        160,850 165,900 130,940
        530,750 520,780 495,870 460,900 400,910 330,930
        545,780 540,900
        560,765 600,830 640,880 700,840
        645,700 660,760 720,800 735,860 690,860
        600,720 620,790 700,800
        790,750 840,780 825,830 900,910 940,930 915,880 930,800 985,730
        850,770 930,750 990,770 1040,800 1050,840 1030,880 960,850
        580,460 640,450 660,480 650,500 600,520 600,550 660,545
        640,400 660,430 660,500
        610,390 640,400
        775,460 810,480 820,520 865,540
        975,510 1000,530 1030,450
        975,510 1000,545 940,580
        1020,540 1060,590 1120,570 1170,540
        1070,620 1090,680 1050,720 990,735
        1070,620 1130,570
        1200,660 1150,670 1090,700
        1040,800 1100,800 1130,840 1200,850
        920,860 960,850`],
  [Z6, `620,175 660,120 680,105
        620,175 660,200 690,250 680,300 705,320 700,370 730,400 780,330 870,300 870,240 820,260 760,250 710,310
        660,200 580,240 575,300 620,380 640,430 700,460 730,490 780,510
        780,510 790,575 830,600 860,590 910,600 910,690 870,720
        780,510 830,490 880,470 990,440 1000,480 1060,490 1090,410 1180,400
        930,110 940,210 880,280 860,340 830,370 850,440 880,470
        1040,170 1030,235 1040,330 1090,370 1150,320 1190,290 1190,210
        1040,330 980,400 990,440
        870,300 930,310 1000,340
        1180,400 1250,340 1400,350
        1190,290 1340,290
        1090,410 1060,520 1120,570 1200,550
        1090,540 1030,640 950,770
        1060,490 1000,510 950,580 910,600
        560,515 610,500 670,550 690,520 660,570 600,620 530,650 480,640 460,570 470,530 430,440
        660,570 700,560 790,575 780,640 810,680 870,680 875,710
        780,640 700,690 640,610
        530,650 520,690 560,720 600,710 690,740
        560,720 530,770 480,800 370,770 380,850 440,890 500,880 540,830 600,810
        380,850 300,900 250,880 200,830 140,830 80,850 50,930 0,930
        480,640 480,720 530,650
        380,770 320,690 240,660 190,690
        240,660 270,600 310,580
        190,570 240,590 270,600
        190,570 150,590 130,540 80,580 0,590
        320,690 350,590 420,600 470,640
        350,590 290,510 270,470 210,470 170,440 190,370
        190,450 150,560
        290,510 340,510 370,520 420,450 400,400
        400,330 460,310 490,240 570,210 580,300
        320,340 240,370 210,420 170,440
        320,340 400,370 400,330
        440,890 450,960 500,980 570,940 620,940 600,1000 560,1030 570,1130
        300,900 380,900 410,960 400,990 300,990 290,1040 220,1090 350,1120 330,1200
        400,990 440,1030 510,1030 560,1050
        350,1120 400,1100 430,1060 480,1060 510,1100 520,1220 480,1220 470,1140 460,1120 400,1150
        570,1130 650,1180 600,1190 560,1170 520,1180
        650,1180 680,1220
        600,1190 600,1260 570,1280 450,1250
        330,1200 390,1220 450,1250 440,1310 405,1335
        570,1280 550,1300 570,1330
        680,1220 660,1270 670,1310 720,1340
        0,1000 50,1000 100,980 180,1000 190,1030 140,1060 70,1040 0,1060
        180,1000 190,950 280,940 300,990
        0,1130 50,1100 100,1030
        70,1040 90,1140 130,1200 220,1220
        0,860 40,880 50,930
        0,650 60,670 150,690 190,690 170,760 130,800 140,830
        100,980 60,930
        220,830 240,930 280,940
        0,700 40,720 100,700 170,750`]
];

// wobble every straight piece a little, so the borders read as real boundaries
function rough(points, close) {
  let d = "";
  const pts = close ? [...points, points[0]] : points;
  pts.forEach((p, i) => {
    if (i === 0) { d += `M${p[0].toFixed(1)} ${p[1].toFixed(1)}`; return; }
    const q = pts[i - 1];
    const len = Math.hypot(p[0] - q[0], p[1] - q[1]);
    const steps = Math.max(1, Math.round(len / 2.6));
    for (let k = 1; k <= steps; k++) {
      const t = k / steps;
      const w = k === steps ? 0 : 1;
      const seed = Math.sin((q[0] + k * 12.9) * 78.2 + (q[1] + k * 4.1) * 37.7) * 43758.5;
      const seed2 = Math.sin((q[1] + k * 7.3) * 91.7 + (q[0] + k * 3.7) * 17.3) * 24634.6;
      const ox = ((seed - Math.floor(seed)) - .5) * 3.4 * w;
      const oy = ((seed2 - Math.floor(seed2)) - .5) * 3.4 * w;
      d += `L${(q[0] + (p[0] - q[0]) * t + ox).toFixed(1)} ${(q[1] + (p[1] - q[1]) * t + oy).toFixed(1)}`;
    }
  });
  return d;
}

class MapView extends Shadowed {
  constructor() {
    super(`<style>
      :host { display: flex; flex-direction: column; flex: 1; min-width: 0; height: 100%; box-sizing: border-box; }
      .top { flex: 1; display: flex; min-height: 0; }
      .canvas { flex: 1; position: relative; background: #fff; border-left: 2px solid #7f7f7f; border-top: 2px solid #7f7f7f; border-right: 2px solid #e2e2e2; overflow: hidden; }
      .canvas svg { position: absolute; left: 0; top: 0; width: 1646px; height: 888px; }
      .vscroll { width: 17px; background: #f0f0f0; flex: none; }
      .vthumb { width: 2px; height: 853px; margin: 17px 0 0 7px; background: #8a8a8a; }
      .bottom { display: flex; align-items: center; height: 17px; flex: none; padding-left: 1px; background: #f0f0f0; --icon-size: 13px; }
      .bottom tool-icon { width: 16px; height: 16px; }
      .bottom tool-icon[selected] { border-width: 1px; }
      .bottom tool-icon[name="refresh"] { margin-left: 3px; }
      .bottom tool-sep { height: 16px; }
      .hthumb { flex: none; width: 1536px; height: 2px; margin-left: 19px; background: #8a8a8a; }
    </style>
    <div class="top">
      <div class="canvas">
        <svg viewBox="233 104 1646 888">
          <defs><clipPath id="prov"><path id="clipshape"/></clipPath></defs>
          <path id="land" fill="#f3f2f0"/>
          <path id="lines" fill="none" stroke="#cbcbcb" stroke-width="1.200" clip-path="url(#prov)"/>
          <path id="edge" fill="none" stroke="#c6c6c6" stroke-width="1.300"/>
        </svg>
        <slot></slot>
      </div>
      <div class="vscroll"><div class="vthumb"></div></div>
    </div>
    <div class="bottom">
      <tool-icon name="pagemap" selected></tool-icon><tool-icon name="pagelay"></tool-icon><tool-sep></tool-sep><tool-icon name="refresh"></tool-icon><tool-icon name="pause"></tool-icon>
      <div class="hthumb"></div>
    </div>`);
  }
  connectedCallback() {
    const r = this.shadowRoot;
    const shape = rough(OUTLINE, true) + "Z";
    r.getElementById("land").setAttribute("d", shape);
    r.getElementById("clipshape").setAttribute("d", shape);
    r.getElementById("edge").setAttribute("d", shape);
    let d = "";
    BORDERS.forEach(([z, text]) => {
      text.trim().split("\n").forEach(line => { d += rough(parse(z, line), false); });
    });
    r.getElementById("lines").setAttribute("d", d);
  }
}

// a pin on the map: x/y are the marker's centre in the screenshot's coordinates
class MapLabel extends Shadowed {
  constructor() {
    super(`<style>
      :host { position: absolute; width: 6px; height: 6px; box-sizing: border-box; background: #7d002e; border: 1px solid #111; }
      span { position: absolute; white-space: nowrap; font: 500 12px/16px "Noto Sans CJK SC", sans-serif; color: #2a2a2a;
             text-shadow: 1px 0 #fff, -1px 0 #fff, 0 1px #fff, 0 -1px #fff, 1px 1px #fff, -1px -1px #fff, 1px -1px #fff, -1px 1px #fff; }
    </style><span><slot></slot></span>`);
  }
  connectedCallback() {
    const x = +this.getAttribute("x"), y = +this.getAttribute("y");
    const dx = +(this.getAttribute("dx") || 2), dy = +(this.getAttribute("dy") || -10.5);
    this.style.left = (x - 3 - 233) + "px";
    this.style.top = (y - 3 - 104) + "px";
    const s = this.shadowRoot.querySelector("span");
    s.style.left = (dx + 2) + "px";
    s.style.top = (dy + 3 - 8 - 1) + "px";
  }
}

class DockTabs extends Shadowed {
  constructor() {
    super(`<style>
      :host { display: flex; flex-direction: column; width: 23px; flex: none; padding: 2px 0 0 3px; box-sizing: border-box; background: #fbfbfb; font: 11px "Liberation Mono", monospace; color: #555; }
      .tab { border: 1px solid #bbb; border-right: 0; border-radius: 4px 0 0 4px; display: flex; flex-direction: column; align-items: center; background: #f5f5f5; }
      .tab + .tab { margin-top: 1px; }
      svg { width: 17px; height: 17px; margin-top: 2px; }
      span { writing-mode: vertical-rl; line-height: 14px; margin-top: 2px; }
    </style>
    <div class="tab" style="height:69px"><svg viewBox="0 0 16 16" id="a"></svg><span>Catalog</span></div>
    <div class="tab" style="height:61px"><svg viewBox="0 0 16 16" id="b"></svg><span>Search</span></div>`);
  }
  connectedCallback() {
    this.shadowRoot.getElementById("a").innerHTML = ICONS.wincat;
    this.shadowRoot.getElementById("b").innerHTML = ICONS.winsearch;
  }
}

class StatusBar extends Shadowed {
  constructor() {
    super(`<style>
      :host { display: flex; align-items: center; height: 23px; background: #f0f0f0; position: relative; font: 12.400px "Noto Sans", sans-serif; color: #111; white-space: pre; }
      .cell { margin-left: 1638px; }
      .mark { position: absolute; left: 1748px; top: 0; font: 15px/23px "Liberation Sans", sans-serif; color: rgba(110,110,110,.6); }
    </style><span class="cell"><slot></slot></span><span class="mark">CSDN @Jacqui~Zhang</span>`);
  }
}

// the red notes somebody painted over the screenshot
class NoteLayer extends Shadowed {
  constructor() {
    super(`<style>
      :host { position: absolute; inset: 0; pointer-events: none; display: block; }
      .box { position: absolute; left: 6px; top: 175px; width: 256px; height: 813px; box-sizing: border-box; border: 3px solid #fb2015; border-radius: 3px; }
      svg { position: absolute; left: 0; top: 0; width: 1920px; height: 1040px; }
      p { position: absolute; margin: 0; font: 21px/28px "Noto Sans CJK SC", sans-serif; color: #fb2015; white-space: nowrap; }
      .n1 { left: 347px; top: 143px; font-size: 21.100px; }
      .n2 { left: 538px; top: 429px; }
    </style>
    <div class="box"></div>
    <svg viewBox="0 0 1920 1040">
      <path d="M103 158L118 150 116 155 310 156 310 158 116 163 118 167z" fill="#fb2015"/>
      <path d="M274 485L288 473 290 478 523 449 523 451 292 487 290 492z" fill="#fb2015"/>
    </svg>
    <p class="n1">在一级目录中一个Layers就是一个图层</p>
    <p class="n2">在Layers下的图层就是子图层，我们可以通过勾选<br>来设置该子图层是否显示</p>`);
  }
}

class ArcApp extends Shadowed {
  constructor() {
    super(`<style>
      :host { display: flex; flex-direction: column; position: relative; width: 1920px; height: 1040px; overflow: hidden; background: #fbfbfb; }
      .tools { display: flex; flex-direction: column; gap: 2px; height: 51px; box-sizing: border-box; flex: none; }
      .main { flex: 1; display: flex; min-height: 0; }
      .split { width: 5px; flex: none; background: #f0f0f0; }
      .strip { height: 8px; background: #cfe6ec; flex: none; }
    </style>
    <slot name="title"></slot>
    <slot name="menu"></slot>
    <div class="tools"><slot name="tools"></slot></div>
    <div class="main">
      <slot name="toc"></slot><div class="split"></div><slot name="map"></slot><slot name="dock"></slot>
    </div>
    <slot name="status"></slot>
    <div class="strip"></div>
    <slot name="notes"></slot>`);
  }
}

customElements.define("tool-icon", ToolIcon);
customElements.define("tool-sep", ToolSep);
customElements.define("tool-drop", ToolDrop);
customElements.define("tool-handle", ToolHandle);
customElements.define("scale-box", ScaleBox);
customElements.define("arc-toolbar", ArcToolbar);
customElements.define("arc-titlebar", ArcTitlebar);
customElements.define("arc-menubar", ArcMenubar);
customElements.define("layer-row", LayerRow);
customElements.define("toc-panel", TocPanel);
customElements.define("map-view", MapView);
customElements.define("map-label", MapLabel);
customElements.define("dock-tabs", DockTabs);
customElements.define("status-bar", StatusBar);
customElements.define("note-layer", NoteLayer);
customElements.define("arc-app", ArcApp);
</script>
</body>
</html>
